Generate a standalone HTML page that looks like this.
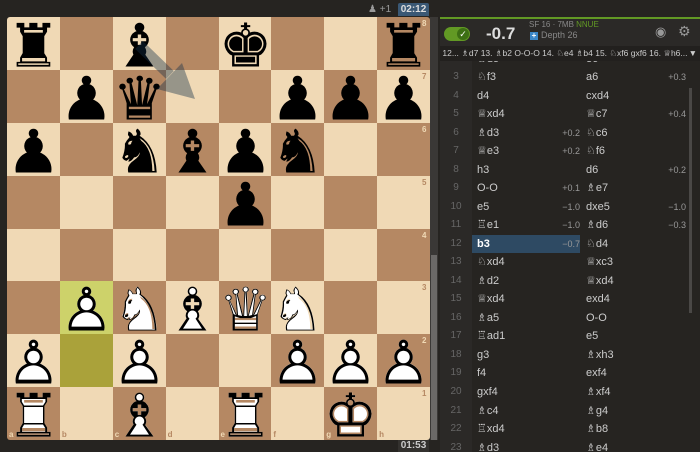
<!DOCTYPE html>
<html><head><meta charset="utf-8"><style>
body{margin:0;width:700px;height:452px;background:#262421;overflow:hidden;position:relative;font-family:"Liberation Sans","DejaVu Sans",sans-serif;}
.sq{position:absolute;width:53px;height:53px;}
.pc{position:absolute;width:53px;height:53px;line-height:52px;text-align:center;font-family:"DejaVu Sans",sans-serif;font-size:50px;transform:translateY(3px) scale(1.2);transform-origin:50% 50%;}
.b{color:#000;}
.w span{position:absolute;left:0;top:0;width:53px;}
.lab{position:absolute;font-size:8px;font-weight:bold;}
.row{position:absolute;left:0;width:250px;height:18px;font-size:11px;color:#ccc;line-height:18px;}
.n{position:absolute;left:0;width:32px;text-align:center;color:#666;font-size:10px;}
.m1{position:absolute;left:37px;}
.e1{position:absolute;right:110px;font-size:9px;color:#999;}
.m2{position:absolute;left:146px;}
.e2{position:absolute;right:4px;font-size:9px;color:#999;}
</style></head><body>
<div style="position:absolute;left:7px;top:17px;width:423px;height:423px;border-radius:3px;overflow:hidden" id="board"></div>
<div style="position:absolute;left:430px;top:17px;width:8px;height:423px;background:#3a3836"></div>
<div style="position:absolute;left:431px;top:255px;width:6px;height:185px;background:#6b6967"></div>
<div style="position:absolute;left:368px;top:4px;color:#999;font-size:10px">♟ +1</div>
<div style="position:absolute;left:398px;top:3px;width:31px;height:13px;background:#3a5875;color:#ddd;font-size:10px;font-weight:bold;text-align:center;line-height:13px;border-radius:2px 2px 0 0">02:12</div>
<div style="position:absolute;left:398px;top:440px;width:31px;height:12px;background:#33312e;color:#ccc;font-size:10px;font-weight:bold;text-align:center;line-height:12px">01:53</div>
<div style="position:absolute;left:440px;top:17px;width:260px;height:435px;background:#262421"></div>
<div style="position:absolute;left:440px;top:17px;width:260px;height:2px;background:#629924"></div>
<div style="position:absolute;left:440px;top:19px;width:260px;height:27px;background:#2b2927"></div>
<div style="position:absolute;left:444px;top:27px;width:26px;height:14px;border-radius:7px;background:#629924"></div>
<div style="position:absolute;left:457px;top:28px;width:12px;height:12px;border-radius:6px;background:#3d6f14;color:#fff;font-size:9px;text-align:center;line-height:12px">✓</div>
<div style="position:absolute;left:486px;top:24px;color:#ddd;font-size:17px;font-weight:bold">-0.7</div>
<div style="position:absolute;left:529px;top:20px;color:#888;font-size:8px">SF 16 · 7MB <span style="color:#629924">NNUE</span></div>
<div style="position:absolute;left:530px;top:32px;width:8px;height:8px;background:#3a86c8;color:#fff;font-size:8px;line-height:8px;text-align:center;font-weight:bold">+</div>
<div style="position:absolute;left:541px;top:30px;color:#888;font-size:9px">Depth 26</div>
<div style="position:absolute;left:655px;top:24px;color:#999;font-size:13px">◉</div>
<div style="position:absolute;left:678px;top:23px;color:#999;font-size:14px">⚙</div>
<div style="position:absolute;left:440px;top:46px;width:260px;height:15px;background:#22201e;color:#ccc;font-size:8.5px;line-height:15px;white-space:nowrap;overflow:hidden">&nbsp;12... ♗d7 13. ♗b2 O-O-O 14. ♘e4 ♗b4 15. ♘xf6 gxf6 16. ♕h6... <span style="position:absolute;right:3px">▼</span></div>
<div style="position:absolute;left:440px;top:61px;width:32px;height:391px;background:#2b2927"></div>
<div style="position:absolute;left:689px;top:88px;width:3px;height:225px;background:#4a4846"></div>
<div id="moves" style="position:absolute;left:440px;top:61px;width:250px;height:391px;overflow:hidden"></div>
<script>
var B=document.getElementById('board');
var pos={a8:'r',c8:'b',e8:'k',h8:'r',b7:'p',c7:'q',f7:'p',g7:'p',h7:'p',a6:'p',c6:'n',d6:'b',e6:'p',f6:'n',e5:'p',
b3:'P',c3:'N',d3:'B',e3:'Q',f3:'N',a2:'P',c2:'P',f2:'P',g2:'P',h2:'P',a1:'R',c1:'B',e1:'R',g1:'K'};
var fill={k:'♚',q:'♛',r:'♜',b:'♝',n:'♞',p:'♟'},out={k:'♔',q:'♕',r:'♖',b:'♗',n:'♘',p:'♙'};
var h='';var S=52.875;
for(var r=0;r<8;r++)for(var f=0;f<8;f++){
 var x=f*S,y=r*S,light=(r+f)%2==0;var c=light?'#f0d9b5':'#b58863';
 var sqn='abcdefgh'[f]+(8-r);
 if(sqn=='b3')c='#cdd26a';if(sqn=='b2')c='#aaa23a';
 h+='<div class="sq" style="left:'+x+'px;top:'+y+'px;background:'+c+'"></div>';
 if(r==7)h+='<div class="lab" style="left:'+(x+2)+'px;top:413px;color:'+(light?'#b58863':'#f0d9b5')+'">'+'abcdefgh'[f]+'</div>';
 if(f==7)h+='<div class="lab" style="left:415px;top:'+(y+2)+'px;color:'+(light?'#b58863':'#f0d9b5')+'">'+(8-r)+'</div>';
}
for(var r=0;r<8;r++)for(var f=0;f<8;f++){
 var x=f*S,y=r*S;var sqn='abcdefgh'[f]+(8-r);var p=pos[sqn];
 if(p){var l=p.toLowerCase();
  if(p==l)h+='<div class="pc b" style="left:'+x+'px;top:'+y+'px">'+fill[l]+'</div>';
  else h+='<div class="pc w" style="left:'+x+'px;top:'+y+'px"><span style="color:#fff">'+fill[l]+'</span><span style="color:#000">'+out[l]+'</span></div>';}
}
h+='<svg width="423" height="423" style="position:absolute;left:0;top:0"><g opacity="0.4" fill="#15304a"><line x1="132" y1="28" x2="163" y2="58" stroke="#15304a" stroke-width="11"/><polygon points="188,82 150,72 175,46"/></g></svg>';
B.innerHTML=h;
var mv=[[3,'♘f3','','a6','+0.3'],[4,'d4','','cxd4',''],[5,'♕xd4','','♕c7','+0.4'],[6,'♗d3','+0.2','♘c6',''],[7,'♕e3','+0.2','♘f6',''],[8,'h3','','d6','+0.2'],[9,'O-O','+0.1','♗e7',''],[10,'e5','−1.0','dxe5','−1.0'],[11,'♖e1','−1.0','♗d6','−0.3'],[12,'b3','−0.7','♘d4',''],[13,'♘xd4','','♕xc3',''],[14,'♗d2','','♕xd4',''],[15,'♕xd4','','exd4',''],[16,'♗a5','','O-O',''],[17,'♖ad1','','e5',''],[18,'g3','','♗xh3',''],[19,'f4','','exf4',''],[20,'gxf4','','♗xf4',''],[21,'♗c4','','♗g4',''],[22,'♖xd4','','♗b8',''],[23,'♗d3','','♗e4','']];
var o='<div class="row" style="top:-11px"><span class="m1">♗d5</span><span class="m2">e6</span></div>';
for(var i=0;i<mv.length;i++){var m=mv[i];var t=7+i*18.53;
 var act=m[0]==12;
 o+='<div class="row" style="top:'+t+'px">'+(act?'<div style="position:absolute;left:32px;width:108px;height:18px;background:#2e4a63"></div>':'')+'<span class="n">'+m[0]+'</span><span class="m1" style="'+(act?'font-weight:bold;color:#fff':'')+'">'+m[1]+'</span><span class="e1">'+m[2]+'</span><span class="m2">'+m[3]+'</span><span class="e2">'+m[4]+'</span></div>';}
document.getElementById('moves').innerHTML=o;
</script>
</body></html>
